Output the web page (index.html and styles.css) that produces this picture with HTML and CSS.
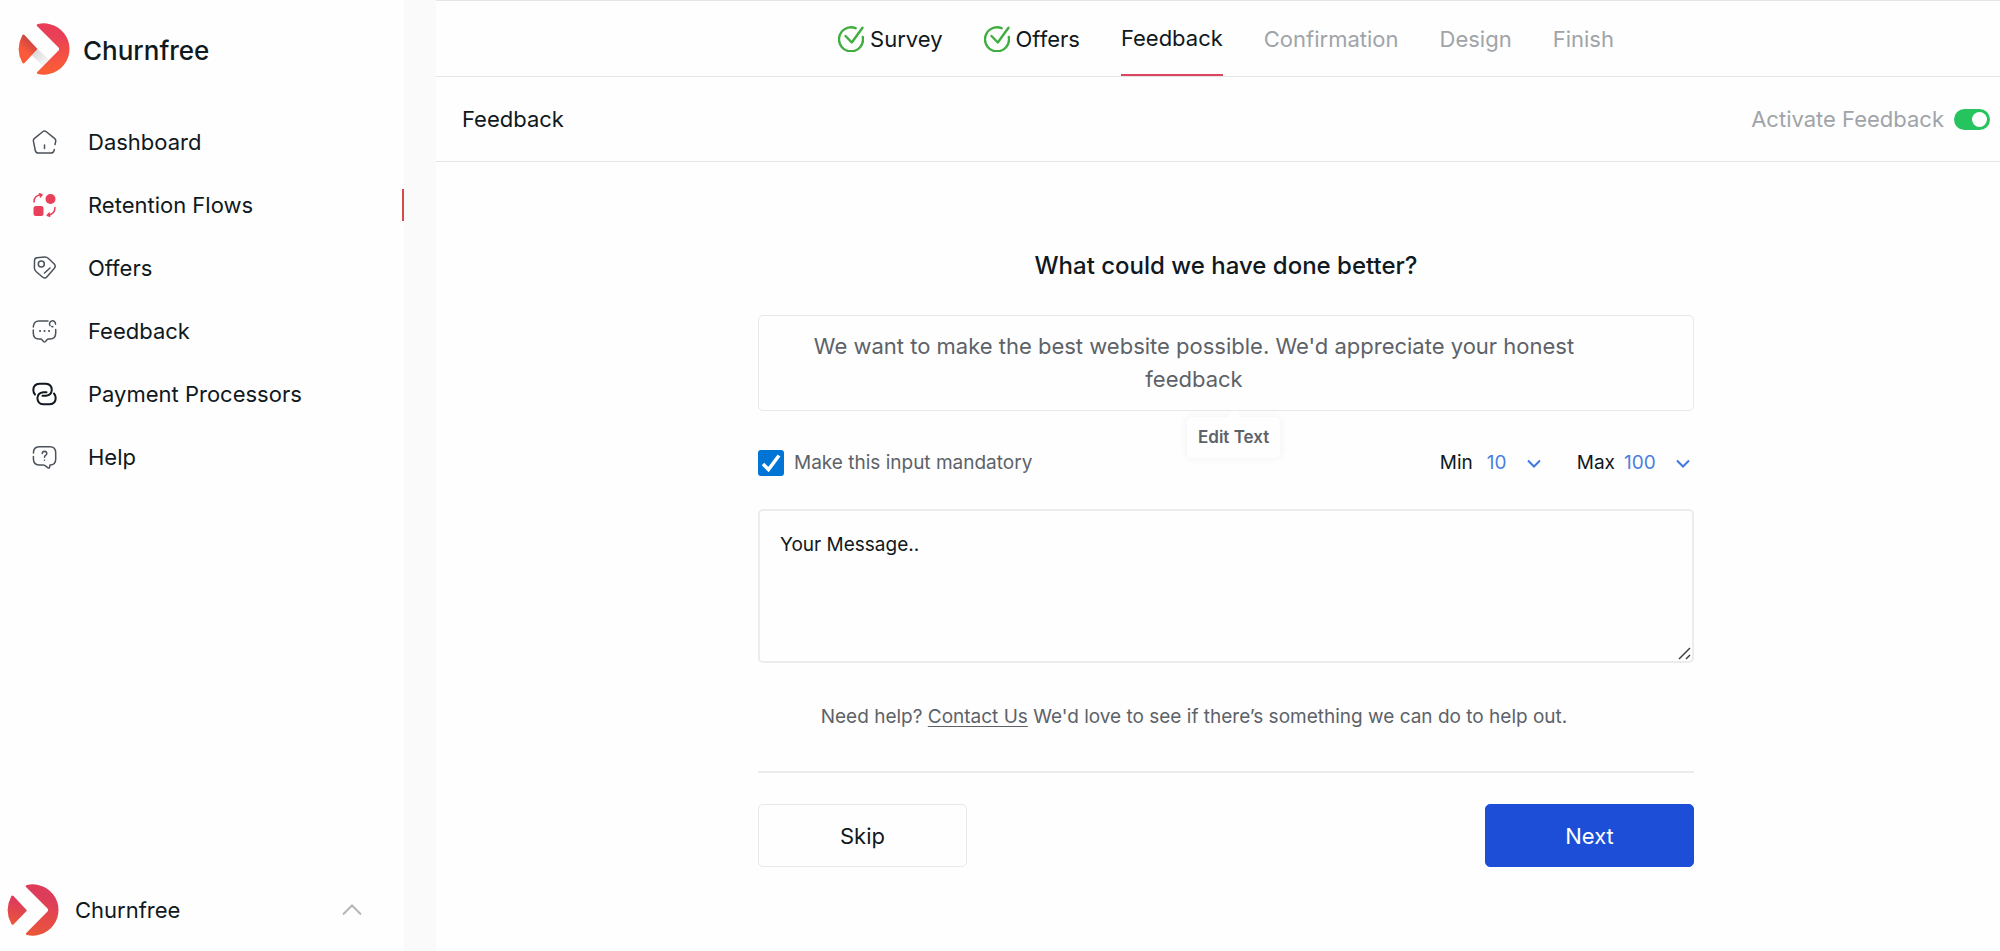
FILE: index.html
```
<!DOCTYPE html>
<html lang="en">
<head>
<meta charset="utf-8">
<meta name="viewport" content="width=device-width, initial-scale=1">
<title>Churnfree - Feedback</title>
<link rel="stylesheet" href="styles.css">
</head>
<body>
<svg class="defs" width="0" height="0" aria-hidden="true">
  <defs>
    <linearGradient id="brand" x1="0" y1="0" x2="0" y2="1">
      <stop offset="0.2" stop-color="#e83e58"/>
      <stop offset="0.9" stop-color="#fb5c38"/>
    </linearGradient>
    <linearGradient id="brandWedge" x1="0.6" y1="0.2" x2="0.3" y2="0.8">
      <stop offset="0" stop-color="#cf4640"/>
      <stop offset="0.7" stop-color="#fa5a3a"/>
    </linearGradient>
    <linearGradient id="brandShade" x1="0" y1="0" x2="1" y2="1">
      <stop offset="0" stop-color="#d2d2d2"/>
      <stop offset="1" stop-color="#ffffff"/>
    </linearGradient>
    <linearGradient id="brandDeep" x1="0.5" y1="0" x2="0.3" y2="1">
      <stop offset="0.2" stop-color="#dd3c5b"/>
      <stop offset="1" stop-color="#ea5639"/>
    </linearGradient>
    <symbol id="tick" viewBox="0 0 26 26">
      <path d="M17.600 2.200A12 12 0 1 0 24.800 11M7.500 10l6.300 6.500L24.500 1.800" fill="none" stroke="#3fae3f" stroke-width="2.400" stroke-linecap="round" stroke-linejoin="round"/>
    </symbol>
  </defs>
</svg>
<div class="app">
  <aside class="sidebar">
    <a class="brand" href="#">
      <svg class="logo" viewBox="0 0 52 52" aria-hidden="true">
        <path d="M19.500 26l11.500 10.500L25 43 13.500 32z" fill="url(#brandShade)"/>
        <path d="M19 3Q18 1.500 20 1 26-.500 32 1.200A25.500 25.500 0 0 1 51.500 26 25.500 25.500 0 0 1 32 50.800Q26 52.500 20 51 18 50.300 19.500 48.800L40.500 27.500Q41.800 26 40.500 24.500z" fill="url(#brand)"/>
        <path d="M4.200 12.500Q5 11 6.500 12L19.500 26 6.500 40Q5 41 4.200 39.500-3 26 4.200 12.500z" fill="url(#brandWedge)"/>
      </svg>
      <span class="brand-name">Churnfree</span>
    </a>
    <nav class="nav" aria-label="Main">
      <a class="nav-item" href="#">
        <svg class="nav-icon" viewBox="0 0 24 24" aria-hidden="true"><path d="M22.500 14.500l.7-3.200q.3-1.800-1.200-2.900L13.500 1.500q-1.500-1-3 0L2 8.300Q.6 9.400.9 11.200l1.900 9.300q.5 2.500 3 2.500h12.600q2.600 0 3.200-2.500l.2-1M12 15v3.500"/></svg>
        Dashboard
      </a>
      <a class="nav-item is-active" href="#">
        <svg class="nav-icon" viewBox="0 0 24 24" aria-hidden="true"><g stroke="none"><circle cx="18" cy="6" r="5" class="solid"/><rect x="1" y="13" width="10" height="10" rx="2.500" class="solid"/></g><path d="M1.500 9Q1.500 2 9 1.700M7 .8l2.500.9L7.800 4M22.500 14.500q0 7-7.500 7.800M17 20l-2.300 2.200 2.500 1"/></svg>
        Retention Flows
      </a>
      <a class="nav-item" href="#">
        <svg class="nav-icon" viewBox="0 0 24 24" aria-hidden="true"><path d="M2 4.500Q2 2 4.500 1.700L12 1q2.200-.2 3.700 1.300l5.800 5.500q2.500 2.500 0 5l-7 7.900q-2.300 2.500-4.900 0L3.500 15.500Q2 14 1.900 12zM12 17l5.500-5"/><circle cx="8.800" cy="8" r="3"/></svg>
        Offers
      </a>
      <a class="nav-item" href="#">
        <svg class="nav-icon" viewBox="0 0 24 24" aria-hidden="true"><path d="M15.500 2H6.500Q1.200 2 .8 8M.8 11v3q0 6 5.500 6H8q.9 0 1.500.8l1.500 1.700q1 1 2 0l1.500-1.700q.6-.8 1.500-.8h1.500q5.700 0 5.700-6v-3.500M17.500 6.500A3 3 0 1 1 23 5.200M19.300 7.500l1 .3"/><path d="M7.500 12h.1M12 12h.1M16.500 12h.1" class="dots"/></svg>
        Feedback
      </a>
      <a class="nav-item" href="#">
        <svg class="nav-icon strong" viewBox="0 0 24 24" aria-hidden="true"><path d="M2.500 12.500Q.8 10.500.8 8 .9 2 7 1.700h6.500q5.500.3 5.800 6-.3 5.500-5.800 6H10M21.500 11.500q1.700 2 1.700 4.500-.1 6-6 6.300h-6.500q-5.500-.3-5.800-6 .3-5.500 5.800-6H14"/></svg>
        Payment Processors
      </a>
      <a class="nav-item" href="#">
        <svg class="nav-icon" viewBox="0 0 24 24" aria-hidden="true"><path d="M.9 8Q1 1.800 6.500 1.700h11q5.700.1 5.700 6v6.500q0 5.500-5.700 5.900l-.5 2.400q-.4 1-1.500.3l-3.300-2.400Q11.500 20 10.500 20h-4Q1 19.800.9 14v-2.500M9.800 8.500Q9.900 6.400 12 6.300q2.200.1 2.300 2.200 0 1.200-1.300 1.900-1 .6-1 1.800M12 15.200v.1"/></svg>
        Help
      </a>
    </nav>
    <button class="account" type="button">
      <svg class="logo" viewBox="0 0 52 52" aria-hidden="true">
        <path d="M19 3Q18 1.500 20 1 26-.500 32 1.200A25.500 25.500 0 0 1 51.500 26 25.500 25.500 0 0 1 32 50.800Q26 52.500 20 51 18 50.300 19.500 48.800L40.500 27.500Q41.800 26 40.500 24.500z" fill="url(#brandDeep)"/>
        <path d="M4.200 12.500Q5 11 6.500 12L20 26.500 6.500 40.500Q5 41.500 4.200 39.500-3 26 4.200 12.500z" fill="url(#brandDeep)"/>
      </svg>
      <span class="account-name">Churnfree</span>
      <svg class="account-caret" viewBox="0 0 20 12" aria-hidden="true"><path d="M1 10.500l9-9 9 9"/></svg>
    </button>
  </aside>
  <main class="main">
    <nav class="steps" aria-label="Steps">
      <a class="step" href="#"><svg class="step-tick" aria-hidden="true"><use href="#tick"/></svg>Survey</a>
      <a class="step" href="#"><svg class="step-tick" aria-hidden="true"><use href="#tick"/></svg>Offers</a>
      <a class="step is-current" href="#" aria-current="step">Feedback</a>
      <a class="step is-next" href="#">Confirmation</a>
      <a class="step is-next" href="#">Design</a>
      <a class="step is-next" href="#">Finish</a>
    </nav>
    <header class="bar">
      <h1 class="bar-title">Feedback</h1>
      <label class="activate">Activate Feedback<input class="switch" type="checkbox" role="switch" checked></label>
    </header>
    <div class="content">
      <form class="form">
        <h2 class="form-title">What could we have done better?</h2>
        <div class="prompt">
          <p class="prompt-text">We want to make the best website possible. We'd appreciate your honest feedback</p>
          <span class="tip" role="tooltip">Edit Text</span>
        </div>
        <div class="options">
          <label class="mandatory"><input class="check" type="checkbox" checked>Make this input mandatory</label>
          <div class="limits">
            <div class="limit">
              <label for="min">Min</label>
              <select class="limit-select" id="min"><option>10</option></select>
            </div>
            <div class="limit limit-max">
              <label for="max">Max</label>
              <select class="limit-select" id="max"><option>100</option></select>
            </div>
          </div>
        </div>
        <textarea class="message" aria-label="Your message" placeholder="Your Message.."></textarea>
        <p class="help">Need help? <a class="help-link" href="#">Contact Us</a> We'd love to see if there’s something we can do to help out.</p>
        <div class="actions">
          <button class="btn" type="button">Skip</button>
          <button class="btn btn-primary" type="submit">Next</button>
        </div>
      </form>
    </div>
  </main>
</div>
</body>
</html>
```
FILE: styles.css
```
*, *::before, *::after { box-sizing: border-box; }
body {
  margin: 0;
  background: #fefefe;
  color: #101820;
  font: 400 22px/32px Inter, "Open Sans", sans-serif;
}
h1, h2, p { margin: 0; font-weight: 400; }
a { color: inherit; text-decoration: none; }
button, select, textarea { font: inherit; color: inherit; }
.defs { position: absolute; }

.app { display: flex; min-height: 100vh; }

/* Sidebar */
.sidebar {
  flex: none;
  display: flex;
  flex-direction: column;
  width: 436px;
  border-right: 32px solid #fafafa;
}
.brand { display: flex; align-items: center; gap: 13px; padding: 23px 18px 0; }
.brand-name { padding-top: 3px; font-size: 26px; font-weight: 500; }
.logo { flex: none; width: 52px; height: 52px; }
.nav { display: flex; flex-direction: column; gap: 31px; margin-top: 51px; }
.nav-item { display: flex; align-items: center; gap: 31px; padding-left: 32px; }
.nav-item.is-active { border-right: 2px solid #d84a4a; }
.nav-icon {
  width: 25px;
  height: 24px;
  fill: none;
  stroke: #4b525a;
  stroke-width: 1.5;
  stroke-linecap: round;
  stroke-linejoin: round;
}
.nav-icon .dots { stroke-width: 2; }
.nav-icon.strong { stroke: #101820; stroke-width: 2; }
.is-active .nav-icon { stroke: #e8405a; }
.nav-icon .solid { fill: #e8405a; }
.account {
  display: flex;
  align-items: center;
  gap: 16px;
  margin-top: auto;
  padding: 0 42px 15px 7px;
  border: 0;
  background: none;
}
.account-caret { width: 20px; height: 12px; margin-left: auto; fill: none; stroke: #b4b7ba; stroke-width: 2; }

/* Step tabs */
.main { flex: 1; min-width: 0; }
.steps {
  display: flex;
  justify-content: center;
  gap: 41px;
  height: 77px;
  padding-left: 16px;
  border: solid #e5e5e5;
  border-width: 1px 0;
}
.step { display: flex; align-items: center; gap: 6px; }
.step-tick { width: 26px; height: 26px; }
.step.is-current { border-bottom: 2px solid #dc4560; }
.step.is-next { color: #a0a4a9; }

.bar {
  display: flex;
  align-items: center;
  justify-content: space-between;
  height: 85px;
  padding: 0 10px 0 26px;
  border-bottom: 1px solid #e5e5e5;
}
.bar-title { font-size: 22px; }
.activate { display: flex; align-items: center; gap: 10px; color: #a0a4a9; }
.switch {
  appearance: none;
  width: 36px;
  height: 21px;
  margin: 0;
  padding: 3px;
  border-radius: 11px;
  background: #25c45e;
}
.switch::before {
  content: "";
  display: block;
  width: 15px;
  height: 15px;
  margin-left: auto;
  border-radius: 50%;
  background: #fff;
}

/* Feedback form */
.content { padding: 88px 0 40px 16px; }
.form {
  display: flex;
  flex-direction: column;
  width: 61%;
  max-width: 936px;
  margin: 0 auto;
}
.form-title { font-size: 24px; font-weight: 500; text-align: center; }
.prompt {
  position: relative;
  margin-top: 33px;
  padding: 14px 64px 14px 0;
  border: 1px solid #e8e8e8;
  border-radius: 5px;
  color: #5d6268;
  line-height: 33px;
  text-align: center;
}
.prompt-text { padding: 0 48px; }
.tip {
  position: absolute;
  top: 101px;
  left: 428px;
  padding: 5px 11px;
  border-radius: 5px;
  background: #fefefe;
  box-shadow: 0 0 10px rgba(0, 0, 0, 0.06);
  font-size: 17px;
  font-weight: 600;
  line-height: 31px;
}
.tip::before {
  content: "";
  position: absolute;
  top: -7px;
  left: 50%;
  margin-left: -8px;
  border: solid transparent;
  border-width: 0 8px 8px;
  border-bottom-color: #fefefe;
}
.options { display: flex; align-items: center; justify-content: space-between; margin-top: 36px; font-size: 19px; }
.mandatory { display: flex; align-items: center; gap: 10px; color: #5d6268; }
.check {
  appearance: none;
  width: 26px;
  height: 26px;
  margin: 0;
  border-radius: 3px;
  background: #0075d6 url("data:image/svg+xml,%3Csvg xmlns='http://www.w3.org/2000/svg' viewBox='0 0 26 26'%3E%3Cpath d='M5 14l5.500 5.500L21 5.500' fill='none' stroke='%23fff' stroke-width='3.500'/%3E%3C/svg%3E");
}
.limits { display: flex; gap: 36px; padding-right: 4px; }
.limit { display: flex; align-items: center; gap: 14px; }
.limit-max { gap: 9px; }
.limit-select {
  appearance: none;
  height: 32px;
  padding: 0 34px 0 0;
  border: 0;
  background: url("data:image/svg+xml,%3Csvg xmlns='http://www.w3.org/2000/svg' viewBox='0 0 14 9'%3E%3Cpath d='M1 1.500l6 6 6-6' fill='none' stroke='%233f78e0' stroke-width='2'/%3E%3C/svg%3E") right center / 14px 9px no-repeat;
  color: #4a7fe0;
}
.message {
  height: 154px;
  margin-top: 30px;
  padding: 18px 20px;
  border: 2px solid #ececec;
  border-radius: 5px;
  background: none;
  font-size: 19px;
  resize: vertical;
}
.message::placeholder { color: #101820; }
.message::-webkit-resizer {
  background: url("data:image/svg+xml,%3Csvg xmlns='http://www.w3.org/2000/svg' viewBox='0 0 15 15'%3E%3Cpath d='M2 13L13 2M9 13l4-4' fill='none' stroke='%23404040' stroke-width='1.500'/%3E%3C/svg%3E");
}
.help { margin-top: 38px; padding: 0 64px 38px 0; border-bottom: 2px solid #ececec; color: #5d6268; font-size: 19px; text-align: center; }
.help-link { text-decoration: underline; text-underline-offset: 3px; }
.actions { display: flex; justify-content: space-between; margin-top: 31px; }
.btn {
  width: 209px;
  height: 63px;
  border: 1px solid #e8e8e8;
  border-radius: 5px;
  background: none;
}
.btn-primary { border-color: #1d4ed8; background: #1d4ed8; color: #fff; }
```
